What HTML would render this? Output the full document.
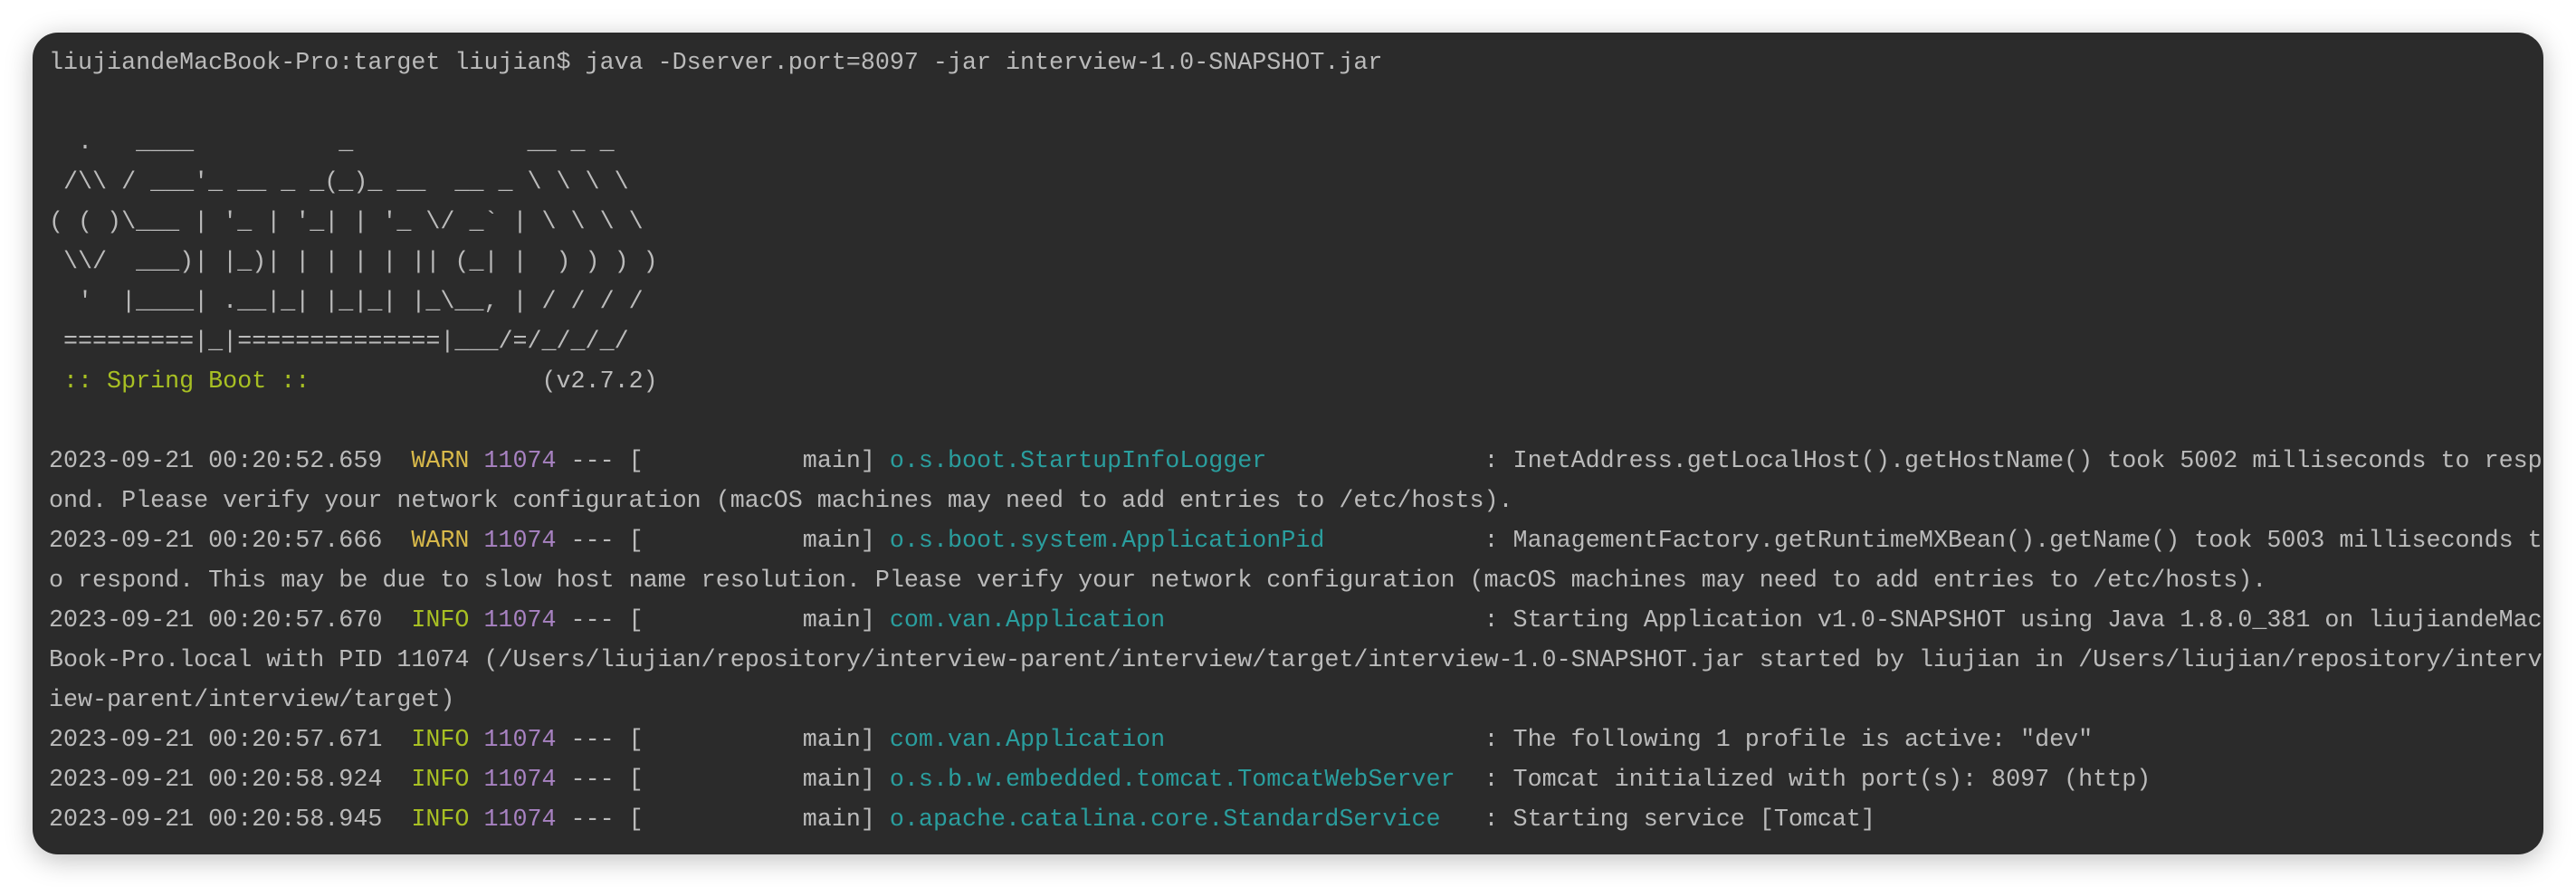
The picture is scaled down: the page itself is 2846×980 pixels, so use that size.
<!DOCTYPE html>
<html><head><meta charset="utf-8"><style>
html,body{margin:0;padding:0;background:#fff;width:2846px;height:980px;overflow:hidden}
.win{position:absolute;left:36px;top:36px;width:2774px;height:908px;background:#2b2b2b;border-radius:28px;box-shadow:0 6px 30px rgba(0,0,0,.25)}
pre{position:absolute;left:54px;top:48px;margin:0;font-family:"Liberation Mono",monospace;font-size:26.7px;line-height:44px;color:#bbbbbb;white-space:pre}
.w{color:#d8b94a}.i{color:#a8c023}.p{color:#a882c2}.l{color:#2a9e9e}.g{color:#a8c023}
</style></head><body>
<div class="win"></div>
<pre>liujiandeMacBook-Pro:target liujian$ java -Dserver.port=8097 -jar interview-1.0-SNAPSHOT.jar

  .   ____          _            __ _ _
 /\\ / ___'_ __ _ _(_)_ __  __ _ \ \ \ \
( ( )\___ | '_ | '_| | '_ \/ _` | \ \ \ \
 \\/  ___)| |_)| | | | | || (_| |  ) ) ) )
  '  |____| .__|_| |_|_| |_\__, | / / / /
 =========|_|==============|___/=/_/_/_/
<span class="g"> :: Spring Boot :: </span>               (v2.7.2)

2023-09-21 00:20:52.659  <span class="w">WARN</span> <span class="p">11074</span> --- [           main] <span class="l">o.s.boot.StartupInfoLogger              </span> : InetAddress.getLocalHost().getHostName() took 5002 milliseconds to resp
ond. Please verify your network configuration (macOS machines may need to add entries to /etc/hosts).
2023-09-21 00:20:57.666  <span class="w">WARN</span> <span class="p">11074</span> --- [           main] <span class="l">o.s.boot.system.ApplicationPid          </span> : ManagementFactory.getRuntimeMXBean().getName() took 5003 milliseconds t
o respond. This may be due to slow host name resolution. Please verify your network configuration (macOS machines may need to add entries to /etc/hosts).
2023-09-21 00:20:57.670  <span class="i">INFO</span> <span class="p">11074</span> --- [           main] <span class="l">com.van.Application                     </span> : Starting Application v1.0-SNAPSHOT using Java 1.8.0_381 on liujiandeMac
Book-Pro.local with PID 11074 (/Users/liujian/repository/interview-parent/interview/target/interview-1.0-SNAPSHOT.jar started by liujian in /Users/liujian/repository/interv
iew-parent/interview/target)
2023-09-21 00:20:57.671  <span class="i">INFO</span> <span class="p">11074</span> --- [           main] <span class="l">com.van.Application                     </span> : The following 1 profile is active: "dev"
2023-09-21 00:20:58.924  <span class="i">INFO</span> <span class="p">11074</span> --- [           main] <span class="l">o.s.b.w.embedded.tomcat.TomcatWebServer </span> : Tomcat initialized with port(s): 8097 (http)
2023-09-21 00:20:58.945  <span class="i">INFO</span> <span class="p">11074</span> --- [           main] <span class="l">o.apache.catalina.core.StandardService  </span> : Starting service [Tomcat]</pre>
</body></html>
